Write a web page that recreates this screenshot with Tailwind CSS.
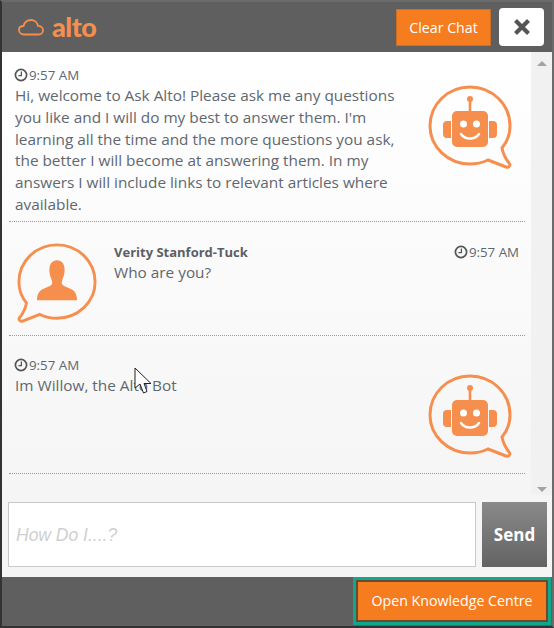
<!DOCTYPE html>
<html lang="en">
<head>
<meta charset="UTF-8">
<title>Ask Alto</title>
<script src="https://cdn.jsdelivr.net/npm/@tailwindcss/browser@4"></script>
</head>
<body class="bg-white font-['Open_Sans',sans-serif]">
<svg width="0" height="0" class="absolute">
  <defs>
    <symbol id="clock" viewBox="0 0 14 14">
      <circle cx="7" cy="7" r="5.6" fill="none" stroke="currentColor" stroke-width="1.7"/>
      <path d="M7.4 3.6V7.6H4.4" fill="none" stroke="currentColor" stroke-width="1.3"/>
    </symbol>
    <symbol id="bot" viewBox="0 0 84 84">
      <path d="M42 2C20 2 2 19 2 41C2 62 20 79 42 79C49 79 54 78 60 75L78 82C81 83 83 80 81 78C77 73 75 68 74 63C79 57 82 49 82 41C82 19 64 2 42 2Z" fill="none" stroke="#f68e4e" stroke-width="3"/>
      <circle cx="42" cy="14" r="3" fill="#f68e4e"/>
      <rect x="40.700" y="15" width="2.600" height="12" fill="#f68e4e"/>
      <rect x="24" y="26" width="36" height="36" rx="5" fill="#f68e4e"/>
      <path d="M23 36H19a4 4 0 0 0-4 4v9a4 4 0 0 0 4 4h4ZM61 36H65a4 4 0 0 1 4 4v9a4 4 0 0 1-4 4h-4Z" fill="#f68e4e"/>
      <circle cx="35.500" cy="39" r="3.500" fill="#fff"/>
      <circle cx="48.500" cy="39" r="3.500" fill="#fff"/>
      <path d="M33 49C37 55 47 55 51 49" fill="none" stroke="#fff" stroke-width="2.500" stroke-linecap="round"/>
    </symbol>
  </defs>
</svg>

<div class="w-[554px] h-[628px] border-2 border-[#6b6b6b] border-l-[#333] border-b-[#333] flex flex-col text-[#5f6770] overflow-hidden">
  <!-- header -->
  <header class="h-[50px] shrink-0 bg-[#5f5f5f] flex items-center justify-between pl-[16px] pr-[8px]">
    <div class="flex items-center gap-[8px] text-[#f68e4e]">
      <svg width="26" height="17" viewBox="0 0 26 17" fill="none" stroke="#f68e4e" stroke-width="1.800"><path d="M6 15.500C3 15.500 1 13.500 1 11C1 8.500 3 7 5.500 7C6.500 3.500 9.500 1 13 1C16.500 1 19.300 3.500 20 6.800C22.800 6.800 25 8.700 25 11.200C25 13.700 23 15.500 20.500 15.500Z"/></svg>
      <span class="text-[27px] font-black leading-none font-['Lato',sans-serif] tracking-[-0.5px] -mt-[2px]">alto</span>
    </div>
    <div class="flex items-center gap-[8px]">
      <button class="w-[95px] h-[37px] pt-[2px] bg-[#f57c1f] border border-[#c96f28] text-white text-[14.200px]">Clear Chat</button>
      <button class="w-[45px] h-[38px] bg-white rounded-[4px] flex items-center justify-center">
        <svg width="18" height="18" viewBox="0 0 18 18"><path d="M2.500 2.500L15.500 15.500M15.500 2.500L2.500 15.500" stroke="#555" stroke-width="4.200"/></svg>
      </button>
    </div>
  </header>

  <!-- messages -->
  <div class="h-[443px] shrink-0 flex bg-gradient-to-b from-white to-[#f5f5f5]">
    <div class="w-[529px] shrink-0 pl-[7px] pr-[6px]">
      <section class="h-[170px] border-b border-dotted border-[#999] flex pl-[6px] pt-[13px]">
        <div class="w-[394px]">
          <div class="flex items-center gap-[1px] text-[13.300px] leading-[20px]"><svg class="w-[14px] h-[14px] -ml-[1px] text-[#555]"><use href="#clock"/></svg>9:57 AM</div>
          <p class="text-[15.350px] leading-[21.800px]">Hi, welcome to Ask Alto! Please ask me any questions you like and I will do my best to answer them. I'm learning all the time and the more questions you ask, the better I will become at answering them. In my answers I will include links to relevant articles where available.</p>
        </div>
        <svg class="w-[84px] h-[84px] ml-[19px] mt-[20px]"><use href="#bot"/></svg>
      </section>

      <section class="h-[114px] border-b border-dotted border-[#999] flex pl-[7px] pt-[21px]">
        <svg class="w-[82px] h-[80px] -scale-x-100" viewBox="0 0 84 84"><path d="M42 2C20 2 2 19 2 41C2 62 20 79 42 79C49 79 54 78 60 75L78 82C81 83 83 80 81 78C77 73 75 68 74 63C79 57 82 49 82 41C82 19 64 2 42 2Z" fill="none" stroke="#f68e4e" stroke-width="3"/><path d="M42 18C37 18 34 22 34 28C34 35 37 38 37 42C37 45 32 46 28 48C23 50 21 54 21 60H63C63 54 61 50 56 48C52 46 47 45 47 42C47 38 50 35 50 28C50 22 47 18 42 18Z" fill="#f68e4e"/></svg>
        <div class="flex-1 ml-[16px] pr-[6px] -mt-[1px]">
          <div class="flex items-center justify-between">
            <span class="text-[13px] leading-[20px] font-bold text-[#5a5f66]">Verity Stanford-Tuck</span>
            <span class="flex items-center gap-[1px] text-[13.300px] leading-[20px] -mt-[1px]"><svg class="w-[14px] h-[14px] text-[#555]"><use href="#clock"/></svg>9:57 AM</span>
          </div>
          <p class="text-[15.350px] leading-[21.800px]">Who are you?</p>
        </div>
      </section>

      <section class="h-[138px] border-b border-dotted border-[#999] flex pl-[6px] pt-[19px]">
        <div class="w-[394px]">
          <div class="flex items-center gap-[1px] text-[13.300px] leading-[20px]"><svg class="w-[14px] h-[14px] -ml-[1px] text-[#555]"><use href="#clock"/></svg>9:57 AM</div>
          <p class="text-[15.350px] leading-[21.800px]">Im Willow, the Alto Bot</p>
        </div>
        <svg class="w-[84px] h-[84px] ml-[19px] mt-[19px]"><use href="#bot"/></svg>
      </section>
    </div>
    <!-- scrollbar -->
    <div class="w-[21px] bg-[#f1f1f1] flex flex-col items-center justify-between pt-[9px] pb-[3px]">
      <div class="w-0 h-0 border-x-[5px] border-x-transparent border-b-[5px] border-b-[#a3a3a3]"></div>
      <div class="w-0 h-0 border-x-[5px] border-x-transparent border-t-[5px] border-t-[#a3a3a3]"></div>
    </div>
  </div>

  <!-- composer -->
  <div class="h-[82px] shrink-0 bg-[#f5f5f5] flex gap-[6px] pl-[6px] pt-[7px]">
    <input placeholder="How Do I....?" class="w-[468px] h-[65px] bg-white border border-[#c8c8c8] px-[7px] pt-[1px] text-[17.500px] italic font-['Liberation_Sans',sans-serif] placeholder:text-[#cfcfcf]">
    <button class="w-[65px] h-[65px] bg-gradient-to-b from-[#8a8a8a] to-[#636363] text-white font-bold text-[17px]">Send</button>
  </div>

  <!-- footer -->
  <footer class="flex-1 bg-[#5f5f5f] flex justify-end items-start pr-[1px]">
    <button class="w-[198px] h-[48px] border-[3px] border-[#10a78a] bg-[#f57c1f] ring-2 ring-inset ring-[#6b4a33] text-white text-[14.200px]">Open Knowledge Centre</button>
  </footer>
</div>

<!-- mouse pointer from the screen capture -->
<svg class="absolute left-[134px] top-[367px]" width="19" height="28" viewBox="0 0 19 28"><path d="M1 1V21L6 17L9.500 26L13 24.500L10 16.500H17Z" fill="#fff" stroke="#222" stroke-width="1"/></svg>
</body>
</html>
